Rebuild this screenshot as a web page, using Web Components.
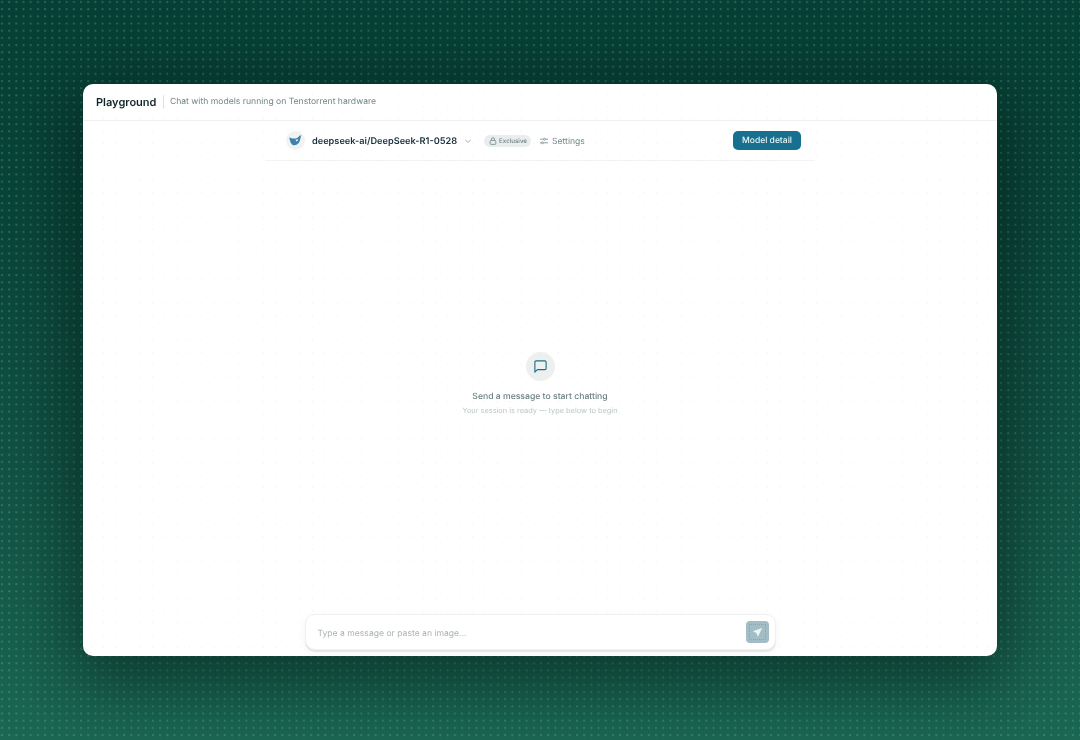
<!DOCTYPE html>
<html><head><meta charset="utf-8"><style>
html,body{margin:0;height:740px;overflow:hidden}
body{font-family:Inter,"Liberation Sans",sans-serif;background-color:#0d4c40;text-rendering:geometricPrecision}
</style></head><body>
<pg-stage>
  <pg-window>
    <pg-header slot="header" title-text="Playground" sub="Chat with models running on Tenstorrent hardware"></pg-header>
    <pg-modelbar slot="bar"></pg-modelbar>
    <pg-empty slot="main"></pg-empty>
    <pg-composer slot="composer"></pg-composer>
  </pg-window>
</pg-stage>
<script>
function def(name, html){
  customElements.define(name, class extends HTMLElement{
    constructor(){super();this.attachShadow({mode:'open'}).innerHTML=html;}
    connectedCallback(){ this.shadowRoot.querySelectorAll('[data-a]').forEach(e=>e.textContent=this.getAttribute(e.dataset.a)); }
  });
}
def('pg-stage',`<style>:host{display:flex;width:1080px;height:740px;align-items:center;justify-content:center;filter:blur(.3px);
 background:
 radial-gradient(circle at 2px 2px,rgba(125,215,185,.26) 0.8px,transparent 1.4px) 0 0/7.2px 7.2px,
 linear-gradient(180deg,#063f35 0%,#0a4539 30%,#125344 65%,#1b6753 100%)}</style><slot></slot>`);
def('pg-window',`<style>:host{display:flex;flex-direction:column;width:914px;height:572px;border-radius:10px;overflow:hidden;
 background:#fff radial-gradient(circle,rgba(20,60,50,.07) .6px,transparent 1px) 2px 4px/12.3px 12.3px;box-shadow:0 18px 70px 10px rgba(0,18,14,.5);}
 main{flex:1;display:flex;align-items:center;justify-content:center}
 footer{display:flex;justify-content:center;padding-bottom:6px}</style>
 <slot name="header"></slot><slot name="bar"></slot><main><slot name="main"></slot></main><footer><slot name="composer"></slot></footer>`);
def('pg-header',`<style>:host{display:flex;align-items:center;padding:0 13px 1px;border-bottom:1px solid #eef1f0;box-sizing:border-box;height:37px;flex:none}
 b{font-size:11px;font-weight:600;color:#12262a}
 i{width:1px;height:14px;background:#dfe4e3;margin:0 6px 0 6.500px}
 span{font-size:8.6px;color:#73878a}</style><b data-a="title-text"></b><i></i><span data-a="sub"></span>`);
def('pg-modelbar',`<style>:host{display:flex;align-items:center;align-self:center;width:550px;height:40px;border-bottom:1px solid #f1f3f3;box-sizing:border-box;flex:none}
 .in{display:flex;align-items:center;width:100%;padding:1px 14px 0 21px;box-sizing:border-box}
 .logo{width:19px;height:19px;border-radius:50%;background:#f1f3f3;display:flex;align-items:center;justify-content:center;flex:none;margin-top:-1px}
 .name{font-size:9.2px;font-weight:600;color:#17303a;margin-left:7px;white-space:nowrap}
 .chev{margin-left:7px;flex:none}
 .badge{display:flex;align-items:center;gap:2px;height:12px;padding:0 4px 0 5px;margin-left:12px;border-radius:6px;background:#e9eded;font-size:6.2px;font-weight:500;color:#6d8286}
 .set{display:flex;align-items:center;gap:4px;margin-left:9px;font-size:8.6px;color:#758a8d;padding-top:1px}
 .set svg{margin-top:-1px}
 button{all:unset;box-sizing:border-box;margin-left:auto;margin-top:-1px;width:68px;height:19px;padding-top:1px;border-radius:5px;background:#17708f;color:#eaf4f7;font-size:8.5px;font-weight:500;display:flex;align-items:center;justify-content:center}
 </style><div class="in">
 <div class="logo"><svg width="13" height="11" viewBox="0 0 13 11"><path fill="#3d82ab" d="M.3 2.2C2 3.2 3.4 3.6 5 3.6c1.2 0 2.6-.3 3.6-.9.7-.5 1.2-1.5 2-1.9.6-.3 1.3-.3 1.9 0-.5.3-.8.6-.9 1 .4.5.3 1-.2 1.400-.3 2.900-1.500 5-3.400 6.200-1.400.8-3 .9-4.300.5C2 9.200.8 6.300.3 2.200Z"/><path fill="#fff" d="M6.500 4.700c1 .1 1.900 0 2.800-.6-.2 1.100-.9 2-1.800 2.300Z"/></svg></div>
 <span class="name">deepseek-ai/DeepSeek-R1-0528</span>
 <svg class="chev" width="8" height="8" viewBox="0 0 8 8" fill="none" stroke="#8c9c9f" stroke-width=".8"><path d="M1.200 2.800 4 5.500l2.800-2.700"/></svg>
 <span class="badge"><svg width="8" height="8" viewBox="0 0 8 8" fill="none" stroke="#72868a" stroke-width=".8"><rect x="1.200" y="3.400" width="5.600" height="4" rx=".8"/><path d="M2.500 3.400V2.200a1.500 1.500 0 0 1 3 0v1.200"/></svg>Exclusive</span>
 <span class="set"><svg width="8" height="8" viewBox="0 0 8 8" fill="none" stroke="#75898d" stroke-width=".8"><path d="M0 2.200h3.500M5.500 2.200H8M0 5.800h1.500M3.500 5.800H8"/><circle cx="4.500" cy="2.200" r="1"/><circle cx="2.500" cy="5.800" r="1"/></svg>Settings</span>
 <button>Model detail</button></div>`);
def('pg-empty',`<style>:host{display:flex;flex-direction:column;align-items:center;margin-bottom:8px}
 .ic{width:29px;height:29px;margin-left:1px;border-radius:50%;background:#eef0f0;display:flex;align-items:center;justify-content:center}
 .t{font-size:8.640px;font-weight:500;color:#6c8084;margin-top:10px;line-height:12px}
 .s{font-size:7.400px;color:#bcc6c8;margin-top:3px;line-height:10px}</style>
 <div class="ic"><svg width="15" height="15" viewBox="0 0 24 24" fill="none" stroke="#1f6f88" stroke-width="1.800" stroke-linecap="round" stroke-linejoin="round"><path d="M21 15a2 2 0 0 1-2 2H7l-4 4V5a2 2 0 0 1 2-2h14a2 2 0 0 1 2 2z"/></svg></div>
 <div class="t">Send a message to start chatting</div><div class="s">Your session is ready — type below to begin</div>`);
def('pg-composer',`<style>:host{display:flex;align-items:center;width:471px;height:36px;border-radius:10px;background:#fff;border:1px solid #eff1f1;box-sizing:border-box;box-shadow:0 2px 0 #e6e8e8,0 2px 8px rgba(0,0,0,.05);padding:0 6px 0 12px}
 span{flex:1;font-size:8.6px;color:#a9b4b6;padding-top:3px}
 div{width:23px;height:22px;border-radius:4px;background:#a3bdc6;display:flex;align-items:center;justify-content:center;outline:1px dotted rgba(60,120,190,.35);outline-offset:-4px}</style>
 <span>Type a message or paste an image...</span>
 <div><svg width="11" height="11" viewBox="0 0 24 24" fill="#eef4f6"><path d="M22 2 2 9.500l7.500 3.500L13 21.500z"/></svg></div>`);
</script>
</body></html>
